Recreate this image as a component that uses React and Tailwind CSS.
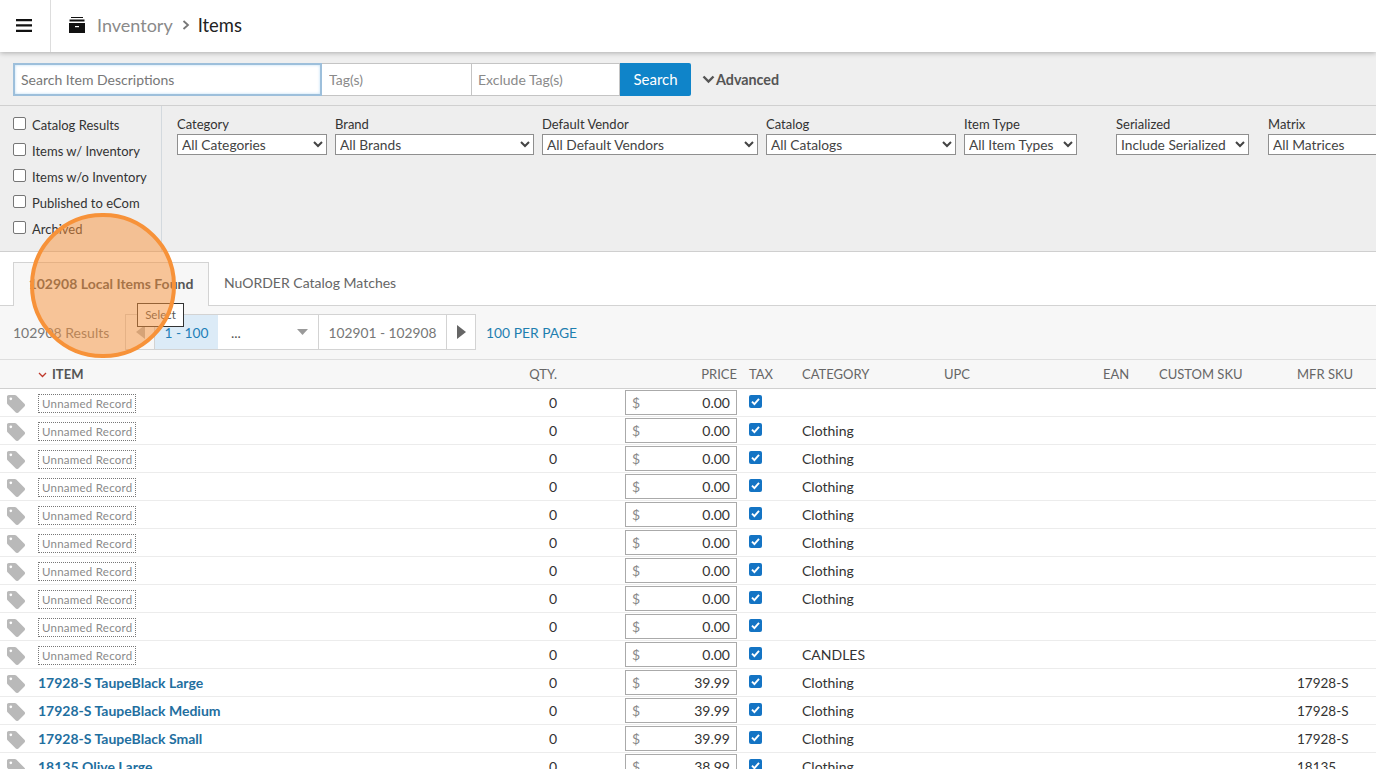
import React from "react";

const tpl = "grid grid-cols-[38px_462px_57px_68px_112px_12px_53px_142px_159px_56px_138px_1fr] items-center";

function Tag() {
  return (
    <svg width="18" height="18" viewBox="1 1 16 16" className="ml-[7px] mt-[3px]">
      <path d="M1 2.6C1 1.7 1.7 1 2.6 1H8c.5 0 .9.2 1.2.5l7.3 7.3c.7.7.7 1.7 0 2.4l-5.3 5.3c-.7.7-1.700.7-2.400 0L1.500 9.200C1.200 8.900 1 8.500 1 8V2.600z" fill="#b9b9b9" />
      <circle cx="4.400" cy="4.400" r="1.200" fill="#fff" />
    </svg>
  );
}

function Checked() {
  return (
    <span className="flex h-[13px] w-[13px] items-center justify-center rounded-[2px] bg-[#1474c4] -mt-[3px]">
      <svg width="11" height="11" viewBox="0 0 11 11"><path d="M2 5.700 4.400 8.200 9 2.800" fill="none" stroke="#fff" strokeWidth="1.900" /></svg>
    </span>
  );
}

function Row({ name, named, price, cat, sku }) {
  return (
    <div className={`${tpl} h-[28px] border-b border-[#ececec] text-[14px] text-[#333]`}>
      <Tag />
      <div>
        {named ? (
          <span className="font-bold text-[#1f6f9f]">{name}</span>
        ) : (
          <span className="inline-block h-[19px] border border-dotted border-[#777] px-[3px] text-[11.5px] leading-[17px] tracking-[0.25px] text-[#8a8a8a]">Unnamed Record</span>
        )}
      </div>
      <div className="text-right">0</div>
      <div />
      <div className="flex h-[25px] items-center justify-between border border-[#aaa] bg-white px-[6px]">
        <span className="text-[#888]">$</span>
        <span>{price}</span>
      </div>
      <div />
      <Checked />
      <div>{cat}</div>
      <div /><div /><div />
      <div className="pt-[1px] text-[13.5px]">{sku}</div>
    </div>
  );
}

const unnamed = ["", "Clothing", "Clothing", "Clothing", "Clothing", "Clothing", "Clothing", "Clothing", "", "CANDLES"];
const named = [
  ["17928-S TaupeBlack Large", "39.99", "17928-S"],
  ["17928-S TaupeBlack Medium", "39.99", "17928-S"],
  ["17928-S TaupeBlack Small", "39.99", "17928-S"],
  ["18135 Olive Large", "38.99", "18135"],
];

function Filter({ label, value, w, left }) {
  return (
    <div className="absolute top-[10px]" style={{ left }}>
      <div className="h-[18px] text-[13px] leading-[17px] text-[#333]">{label}</div>
      <select className="block h-[21px] border border-[#8f8f8f] bg-white text-[13.75px] text-[#444]" style={{ width: w }} defaultValue={value}>
        <option>{value}</option>
      </select>
    </div>
  );
}

function Check({ label }) {
  return (
    <label className="flex h-[26px] items-center text-[13px] text-[#333]">
      <span className="mr-[6px] ml-[13px] -mt-[4px] h-[13px] w-[13px] rounded-[2px] border border-[#767676] bg-white" />
      <span className="mt-[2px]">{label}</span>
    </label>
  );
}

export default function App() {
  return (
    <div className="relative h-[769px] w-[1376px] overflow-hidden bg-white font-['Lato','Liberation_Sans',sans-serif]">
      <header className="relative z-10 flex h-[52px] items-center bg-white shadow-[0_1px_5px_rgba(0,0,0,0.28)]">
        <div className="flex h-full w-[51px] items-center justify-center border-r border-[#ddd] pr-[2px]">
          <svg width="16" height="13" viewBox="0 0 16 13" className="mb-[1px]"><path d="M0 0h16v2.300H0zM0 5.300h16v2.300H0zM0 10.700h16v2.300H0z" fill="#111" /></svg>
        </div>
        <svg width="18" height="18" viewBox="0 0 18 18" className="ml-[17px] mb-[2px]">
          <path d="M3 1h12v1H3zM1.500 3.500h15v2h-15z" fill="#111" />
          <path d="M1 7h16v10H1z" fill="#111" />
          <path d="M7 10h4v1.200H7z" fill="#fff" />
        </svg>
        <span className="ml-[11px] mb-[1px] text-[18px] text-[#8a8a8a]">Inventory</span>
        <svg width="8" height="10" viewBox="0 0 8 10" className="ml-[9px] mr-[8px] mb-[2px]"><path d="M1.500 1 6 5l-4.500 4" fill="none" stroke="#777" strokeWidth="1.800" /></svg>
        <span className="text-[18.400px] text-[#222]">Items</span>
      </header>

      <div className="flex h-[54px] items-center border-b border-[#d0d0d0] bg-[#efefef] pl-[13px] pt-[2px]">
        <input readOnly placeholder="Search Item Descriptions" className="h-[33px] w-[309px] border-2 border-[#9dbfdb] bg-white pl-[6px] text-[14px] text-[#333] shadow-[inset_0_0_3px_#b9dcf5] outline-none placeholder:text-[#777]" />
        <input readOnly placeholder="Tag(s)" className="h-[33px] w-[150px] border border-l-0 border-[#c4c4c4] bg-white pl-[7px] text-[14px] placeholder:text-[#8a8a8a]" />
        <input readOnly placeholder="Exclude Tag(s)" className="h-[33px] w-[148px] border border-l-0 border-[#c4c4c4] bg-white pl-[6px] text-[14px] placeholder:text-[#8a8a8a]" />
        <button className="flex h-[33px] w-[71px] items-center justify-center rounded-r-[2px] bg-[#0f84c9] text-[15px] text-white">Search</button>
        <svg width="13" height="9" viewBox="0 0 13 9" className="ml-[11px]"><path d="M1.500 1.500 6.500 6.500l5-5" fill="none" stroke="#555" strokeWidth="2.400" /></svg>
        <span className="ml-[1px] text-[14.300px] font-bold text-[#555]">Advanced</span>
      </div>

      <div className="relative flex h-[146px] border-b border-[#cfcfcf] bg-[#eeeeee]">
        <div className="h-full w-[162px] border-r border-[#d3d9de] pt-[6px]">
          <Check label="Catalog Results" />
          <Check label="Items w/ Inventory" />
          <Check label="Items w/o Inventory" />
          <Check label="Published to eCom" />
          <Check label="Archived" />
        </div>
        <Filter label="Category" value="All Categories" w={150} left={177} />
        <Filter label="Brand" value="All Brands" w={199} left={335} />
        <Filter label="Default Vendor" value="All Default Vendors" w={216} left={542} />
        <Filter label="Catalog" value="All Catalogs" w={190} left={766} />
        <Filter label="Item Type" value="All Item Types" w={113} left={964} />
        <Filter label="Serialized" value="Include Serialized" w={133} left={1116} />
        <Filter label="Matrix" value="All Matrices" w={130} left={1268} />
      </div>

      <div className="flex h-[54px] items-end border-b border-[#d3d3d3] bg-white pl-[13px]">
        <div className="-mb-[1px] flex h-[44px] w-[196px] items-center justify-center border border-b-0 border-[#d3d3d3] bg-[#f7f7f7] pb-[2px] text-[14px] font-bold text-[#555]">102908 Local Items Found</div>
        <div className="flex h-[44px] items-center pb-[2px] pl-[15px] text-[14px] text-[#666]">NuORDER Catalog Matches</div>
      </div>

      <div className="flex h-[54px] items-center border-b border-[#dedede] bg-[#f7f7f7] pl-[13px] pb-[1px]">
        <span className="w-[112px] text-[14px] text-[#777]">102908 Results</span>
        <div className="flex h-[36px] w-[30px] items-center justify-center border border-[#d3d3d3]">
          <svg width="9" height="14" viewBox="0 0 9 14"><path d="M9 0v14L0 7z" fill="#b5b5b5" /></svg>
        </div>
        <div className="flex h-[36px] w-[63px] items-center justify-center border-y border-[#d3d3d3] bg-[#dcebf7] pt-[2px] text-[13.75px] text-[#1f7fb8]">1 - 100</div>
        <div className="flex h-[36px] w-[100px] items-center justify-between border-y border-[#d3d3d3] bg-white pl-[13px] pr-[10px] text-[14px] text-[#555]">
          <span>...</span>
          <svg width="11" height="6" viewBox="0 0 11 6"><path d="M0 0h11L5.500 6z" fill="#9a9a9a" /></svg>
        </div>
        <div className="flex h-[36px] w-[129px] items-center justify-center border border-[#d3d3d3] bg-white pt-[2px] text-[13.75px] text-[#777]">102901 - 102908</div>
        <div className="flex h-[36px] w-[29px] items-center justify-center border-y border-r border-[#d3d3d3] bg-white">
          <svg width="9" height="14" viewBox="0 0 9 14"><path d="M0 0v14l9-7z" fill="#666" /></svg>
        </div>
        <span className="ml-[10px] mt-[2px] text-[13.850px] text-[#1f7fb0]">100 PER PAGE</span>
      </div>

      <div className={`${tpl} h-[29px] border-b border-[#d0d0d0] bg-[#f7f7f7] pt-[2px] text-[13px] text-[#666]`}>
        <div />
        <div className="flex items-center font-bold text-[#555]">
          <svg width="9" height="6" viewBox="0 0 9 6" className="mr-[5px]"><path d="M1 1l3.500 3.500L8 1" fill="none" stroke="#c0392b" strokeWidth="1.300" /></svg>
          ITEM
        </div>
        <div className="text-right">QTY.</div>
        <div />
        <div className="text-right">PRICE</div>
        <div />
        <div>TAX</div>
        <div>CATEGORY</div>
        <div>UPC</div>
        <div>EAN</div>
        <div>CUSTOM SKU</div>
        <div>MFR SKU</div>
      </div>

      {unnamed.map((c, i) => <Row key={i} price="0.00" cat={c} />)}
      {named.map((n) => <Row key={n[0]} named name={n[0]} price={n[1]} cat="Clothing" sku={n[2]} />)}

      <div className="absolute left-[137px] top-[303px] z-20 flex h-[24px] w-[47px] items-center justify-center border border-[#333] bg-white text-[11.5px] text-[#555]">Select</div>
      <div className="absolute left-[30px] top-[213px] z-30 h-[145px] w-[146px] rounded-full border-[4px] border-[#f79239] bg-[rgba(247,146,57,0.5)]" />
    </div>
  );
}
